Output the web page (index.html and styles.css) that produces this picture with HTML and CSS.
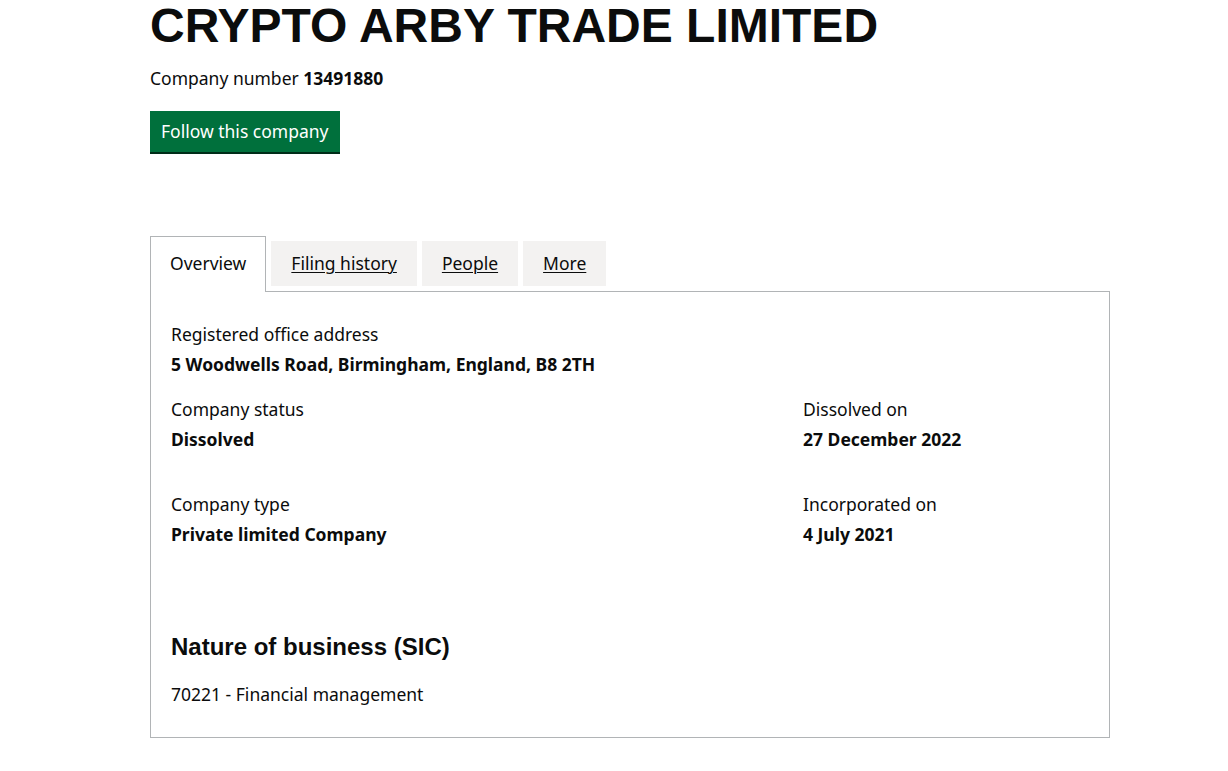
FILE: index.html
```html
<!DOCTYPE html>
<html lang="en">
<head>
  <meta charset="UTF-8">
  <title>CRYPTO ARBY TRADE LIMITED overview</title>
  <link rel="stylesheet" href="styles.css">
</head>
<body>
  <main id="page-container">
    <div class="company-header">
      <h1 class="heading-xlarge">CRYPTO ARBY TRADE LIMITED</h1>
      <p class="company-number">Company number <strong>13491880</strong></p>
      <a href="#" class="button">Follow this company</a>
    </div>

    <div class="tabs">
      <ul class="tabs-list">
        <li class="tab active"><span>Overview</span></li>
        <li class="tab"><a href="#">Filing history</a></li>
        <li class="tab"><a href="#">People</a></li>
        <li class="tab"><a href="#">More</a></li>
      </ul>

      <div class="tab-panel">
        <dl class="summary">
          <dt>Registered office address</dt>
          <dd class="text-large">5 Woodwells Road, Birmingham, England, B8 2TH</dd>
        </dl>

        <div class="grid-row">
          <div class="column-two-thirds">
            <dl class="summary">
              <dt>Company status</dt>
              <dd class="text-large">Dissolved</dd>
            </dl>
            <dl class="summary">
              <dt>Company type</dt>
              <dd class="text-large">Private limited Company</dd>
            </dl>
          </div>
          <div class="column-one-third">
            <dl class="summary">
              <dt>Dissolved on</dt>
              <dd class="text-large">27 December 2022</dd>
            </dl>
            <dl class="summary">
              <dt>Incorporated on</dt>
              <dd class="text-large">4 July 2021</dd>
            </dl>
          </div>
        </div>

        <h2 class="heading-medium">Nature of business (SIC)</h2>
        <ul class="sic-list">
          <li>70221 - Financial management</li>
        </ul>
      </div>
    </div>
  </main>
</body>
</html>
```

FILE: styles.css
```css
/* Companies House style overview page */
body {
  margin: 0;
  padding: 0;
  font-family: "Noto Sans", Arial, sans-serif;
  font-size: 17.5px;
  line-height: 25px;
  color: #0b0c0c;
  background-color: #fff;
}

#page-container {
  width: 960px;
  margin-left: 150px;
}

.heading-xlarge {
  font-family: "Liberation Sans", Arial, sans-serif;
  font-size: 48px;
  line-height: 48px;
  font-weight: 700;
  margin: 2px 0 0;
}

.company-number {
  margin: 16px 0 0;
}

.company-number strong {
  font-weight: 700;
}

.button {
  display: inline-block;
  margin-top: 20px;
  padding: 8px 11px 8px;
  background-color: #00703c;
  box-shadow: 0 2px 0 #002d18;
  color: #fff;
  text-decoration: none;
  line-height: 25px;
}

/* Tabs */
.tabs {
  margin-top: 84px;
  margin-bottom: 30px;
}

.tabs-list {
  list-style: none;
  margin: 0;
  padding: 0;
  display: flex;
  align-items: flex-start;
}

.tab {
  margin-top: 5px;
  margin-right: 5px;
  padding: 10px 20px;
  background-color: #f3f2f1;
}

.tab a {
  color: #0b0c0c;
  text-decoration: underline;
  text-underline-offset: 2px;
  text-decoration-thickness: 1px;
}

.tab.active {
  position: relative;
  margin-top: 0;
  margin-bottom: -1px;
  padding: 14px 19px 16px;
  border: 1px solid #b1b4b6;
  border-bottom: 0;
  background-color: #fff;
}

.tab-panel {
  border: 1px solid #b1b4b6;
  padding: 30px 20px 30px;
}

/* Summary lists */
.summary {
  margin: 0 0 20px;
}

.summary dt {
  margin: 0 0 5px;
}

.summary dd {
  margin: 0;
}

.text-large {
  font-weight: 700;
}

.grid-row {
  display: grid;
  grid-template-columns: 2fr 1fr;
  margin: 0 -15px;
}

.column-two-thirds,
.column-one-third {
  padding: 0 15px;
}

.grid-row .summary {
  margin-bottom: 40px;
}

.heading-medium {
  font-family: "Liberation Sans", Arial, sans-serif;
  font-size: 24px;
  line-height: 30px;
  font-weight: 700;
  margin: 45px 0 20px;
}

.sic-list {
  list-style: none;
  margin: 0;
  padding: 0;
}
```
